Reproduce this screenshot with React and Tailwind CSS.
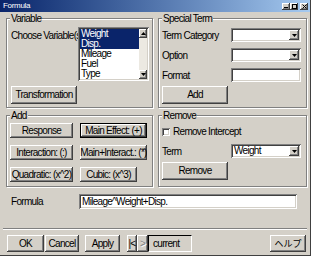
import React from 'react';

const raised =
  'bg-[#d4d0c8] shadow-[inset_-1px_-1px_0_#404040,inset_1px_1px_0_#fff,inset_-2px_-2px_0_#808080,inset_2px_2px_0_#d4d0c8]';
const sunken =
  'bg-white shadow-[inset_1px_1px_0_#808080,inset_-1px_-1px_0_#fff,inset_2px_2px_0_#404040,inset_-2px_-2px_0_#d4d0c8]';

const Btn = ({ className = '', children }) => (
  <div className={`${raised} flex items-center justify-center overflow-hidden whitespace-nowrap leading-none ${className}`}>
    {children}
  </div>
);

const Arrow = ({ down = true }) => (
  <svg width="5" height="3" viewBox="0 0 5 3">
    <path d={down ? 'M0 0H5L2.5 3Z' : 'M0 3H5L2.5 0Z'} fill="#000" />
  </svg>
);

const Combo = ({ value = '' }) => (
  <div className={`${sunken} w-[70px] h-[14px] flex items-center p-[2px]`}>
    <div className="flex-1 pl-[1px] leading-none">{value}</div>
    <div className={`${raised} w-[10px] h-full flex items-center justify-center`}>
      <Arrow />
    </div>
  </div>
);

const Group = ({ title, className = '', children }) => (
  <div className={`border border-[#808080] shadow-[inset_1px_1px_0_#fff,1px_1px_0_#fff] ${className}`}>
    <div className="-mt-[7px] ml-[3px] w-fit bg-[#d4d0c8] px-[1px] h-[12px] leading-[14px]">{title}</div>
    {children}
  </div>
);

const TitleButton = ({ children }) => (
  <div className={`${raised} w-[8px] h-[7px] flex items-center justify-center`}>{children}</div>
);

export default function App() {
  const items = [
    { name: 'Weight', sel: true },
    { name: 'Disp.', sel: true },
    { name: 'Mileage' },
    { name: 'Fuel' },
    { name: 'Type' },
  ];

  return (
    <div className="w-[311px] h-[256px] bg-[#d4d0c8] flex flex-col overflow-hidden border-r border-b border-[#404040] text-[10px] tracking-[-0.7px] text-black font-['Liberation_Sans',Arial,sans-serif]">
      {/* title bar */}
      <div className="h-[12px] flex items-center bg-gradient-to-r from-[#0a246a] to-[#a6caf0]">
        <span className="ml-[3px] text-[8px] tracking-[-0.3px] leading-none text-white">Formula</span>
        <div className="ml-auto mr-[2px] flex items-center">
          <TitleButton>
            <svg width="4" height="5" viewBox="0 0 4 5"><rect x="0" y="3" width="4" height="1" fill="#000" /></svg>
          </TitleButton>
          <TitleButton>
            <svg width="5" height="5" viewBox="0 0 5 5"><rect x="0.5" y="0.5" width="4" height="4" fill="none" stroke="#000" /></svg>
          </TitleButton>
          <div className="w-[2px]" />
          <TitleButton>
            <svg width="5" height="5" viewBox="0 0 5 5"><path d="M0.5 0.5L4.5 4.5M4.5 0.5L0.5 4.5" stroke="#000" /></svg>
          </TitleButton>
        </div>
      </div>

      {/* variable / special term */}
      <div className="flex gap-[5px] pl-[6px] mt-[6px]">
        <Group title="Variable" className="w-[147px] h-[90px]">
          <div className="pl-[4px]">
            <div className="flex items-start mt-[3px]">
              <div className="w-[67px] mt-[3px] overflow-hidden whitespace-nowrap leading-[11px]">Choose Variable(s)</div>
              <div className={`${sunken} w-[71px] h-[54px] flex p-[2px]`}>
                <div className="flex-1 flex flex-col">
                  {items.map((it) => (
                    <div
                      key={it.name}
                      className={`h-[10px] leading-[10px] pl-[1px] ${it.sel ? 'bg-[#0a246a] text-white' : ''}`}
                    >
                      {it.name}
                    </div>
                  ))}
                </div>
                <div className="w-[8px] flex flex-col bg-[#ece9e2]">
                  <div className={`${raised} h-[9px] flex items-center justify-center`}><Arrow down={false} /></div>
                  <div className="flex-1" />
                  <div className={`${raised} h-[9px] flex items-center justify-center`}><Arrow /></div>
                </div>
              </div>
            </div>
            <Btn className="mt-[5px] w-[66px] h-[18px]">Transformation</Btn>
          </div>
        </Group>

        <Group title="Special Term" className="w-[149px] h-[90px]">
          <div className="pl-[3px]">
            <div className="flex flex-col gap-[6px] mt-[4px]">
              <div className="flex items-center h-[14px]">
                <div className="w-[69px]">Term Category</div>
                <Combo />
              </div>
              <div className="flex items-center h-[14px]">
                <div className="w-[69px]">Option</div>
                <Combo />
              </div>
              <div className="flex items-center h-[14px]">
                <div className="w-[69px]">Format</div>
                <div className={`${sunken} w-[70px] h-[14px]`} />
              </div>
            </div>
            <Btn className="mt-[4px] w-[66px] h-[18px]">Add</Btn>
          </div>
        </Group>
      </div>

      {/* add / remove */}
      <div className="flex gap-[5px] pl-[6px] mt-[7px]">
        <Group title="Add" className="w-[147px] h-[72px]">
          <div className="pl-[3px] mt-[2px] flex flex-col gap-[7px]">
            <div className="flex gap-[7px]">
              <Btn className="w-[63px] h-[15px]">Response</Btn>
              <Btn className="w-[67px] h-[15px] border border-black">Main Effect: (+)</Btn>
            </div>
            <div className="flex gap-[7px]">
              <Btn className="w-[63px] h-[15px]">Interaction: (:)</Btn>
              <Btn className="w-[67px] h-[15px]">Main+Interact.: (*)</Btn>
            </div>
            <div className="flex gap-[7px]">
              <Btn className="w-[63px] h-[15px]">Quadratic: (x^2)</Btn>
              <Btn className="w-[57px] h-[15px]">Cubic: (x^3)</Btn>
            </div>
          </div>
        </Group>

        <Group title="Remove" className="w-[149px] h-[72px]">
          <div className="pl-[3px]">
            <div className="flex items-center h-[11px] mt-[5px]">
              <div className={`${sunken} w-[8px] h-[8px]`} />
              <span className="ml-[3px]">Remove Intercept</span>
            </div>
            <div className="flex items-center h-[14px] mt-[7px]">
              <div className="w-[69px]">Term</div>
              <Combo value="Weight" />
            </div>
            <Btn className="mt-[4px] w-[66px] h-[18px]">Remove</Btn>
          </div>
        </Group>
      </div>

      {/* formula */}
      <div className="flex items-center h-[15px] mt-[7px] pl-[11px]">
        <div className="w-[68px]">Formula</div>
        <div className={`${sunken} w-[218px] h-[15px] flex items-center pl-[3px] whitespace-nowrap`}>Mileage^Weight+Disp.</div>
      </div>

      <div className="mt-[19px] mx-[3px] h-[2px] border-t border-b border-t-[#808080] border-b-white" />

      {/* bottom buttons */}
      <div className="flex items-center mt-[5px] pl-[7px] h-[17px]">
        <Btn className="w-[37px] h-[17px]">OK</Btn>
        <Btn className="ml-[1px] w-[34px] h-[17px]">Cancel</Btn>
        <Btn className="ml-[6px] w-[35px] h-[17px]">Apply</Btn>
        <Btn className="ml-[7px] w-[10px] h-[17px]">|&lt;</Btn>
        <Btn className="w-[11px] h-[17px] text-[#808080] [text-shadow:1px_1px_0_#fff]">&gt;</Btn>
        <div className="w-[44px] h-[17px] flex items-center pl-[4px] border-t border-l border-black border-r border-b border-r-white border-b-white">current</div>
        <Btn className="ml-auto mr-[4px] w-[36px] h-[17px] text-[9px] tracking-normal font-['Noto_Sans_CJK_JP',sans-serif]">ヘルプ</Btn>
      </div>
    </div>
  );
}
